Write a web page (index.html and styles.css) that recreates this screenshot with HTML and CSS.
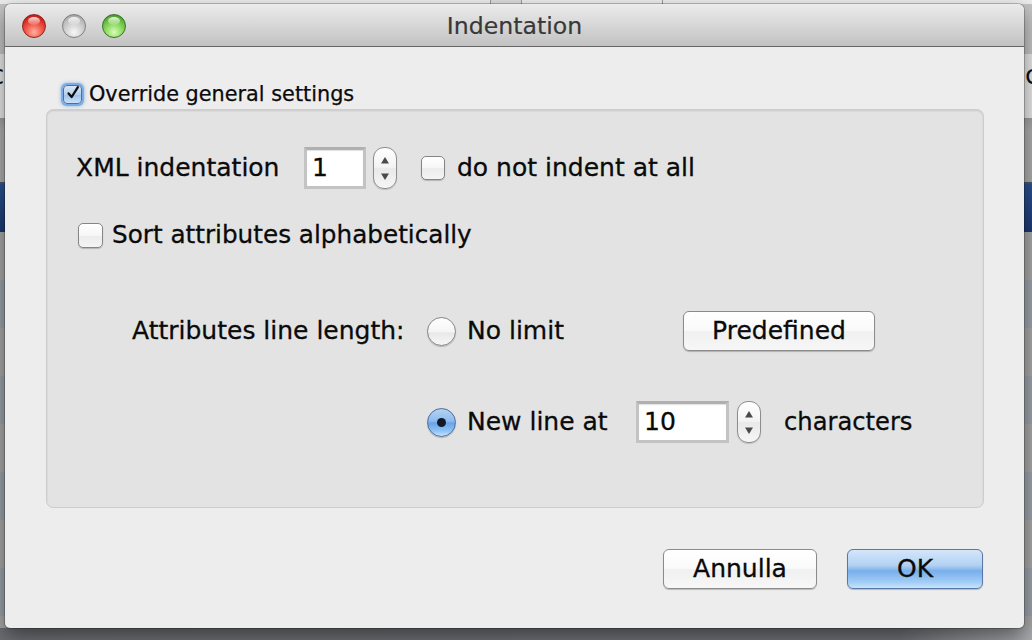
FILE: index.html
```html
<!DOCTYPE html>
<html>
<head>
<meta charset="utf-8">
<title>Indentation</title>
<link rel="stylesheet" href="styles.css">
</head>
<body>
<div class="desktop">
  <div class="behind-top">
    <span class="bt-box"></span>
    <span class="bt-text bt-search">Search in:</span>
    <span class="bt-sep"></span>
    <span class="bt-text bt-attr">Attribute values</span>
  </div>
  <span class="edge-c edge-left">c</span>
  <span class="edge-c edge-right">c</span>

  <div class="window">
    <div class="titlebar">
      <div class="lights">
        <span class="light red"></span>
        <span class="light gray"></span>
        <span class="light green"></span>
      </div>
      <div class="title">Indentation</div>
      <div></div>
    </div>

    <div class="content">
      <div class="override">
        <span class="check small checked">
          <svg width="18" height="18" viewBox="0 0 18 18"><path d="M4 9.5 L7.5 13.5 L14.5 2.5" fill="none" stroke="#0d0d0d" stroke-width="2.6" stroke-linecap="round" stroke-linejoin="round"/></svg>
        </span>
        <span class="override-text">Override general settings</span>
      </div>

      <div class="panel">
        <div class="row row-xml">
          <span class="xml-label">XML indentation</span>
          <span class="field field-1">1</span>
          <span class="stepper">
            <svg width="24" height="42" viewBox="0 0 24 42"><polygon points="8,16.5 16,16.5 12,10" fill="#4a4a4a"/><polygon points="8,26.5 16,26.5 12,33" fill="#4a4a4a"/></svg>
          </span>
          <span class="check check-indent"></span>
          <span class="opt-text indent-text">do not indent at all</span>
        </div>

        <div class="row row-sort">
          <span class="check check-sort"></span>
          <span class="opt-text sort-text">Sort attributes alphabetically</span>
        </div>

        <div class="row row-len">
          <span class="len-label">Attributes line length:</span>
          <span class="radio"></span>
          <span class="opt-text nolimit">No limit</span>
          <span class="btn btn-predef">Predefined</span>
        </div>

        <div class="row row-new">
          <span class="radio selected"><span class="dot"></span></span>
          <span class="opt-text newline">New line at</span>
          <span class="field field-10">10</span>
          <span class="stepper stepper-2">
            <svg width="24" height="42" viewBox="0 0 24 42"><polygon points="8,16.5 16,16.5 12,10" fill="#4a4a4a"/><polygon points="8,26.5 16,26.5 12,33" fill="#4a4a4a"/></svg>
          </span>
          <span class="opt-text chars">characters</span>
        </div>
      </div>

      <div class="actions">
        <span class="btn btn-cancel">Annulla</span>
        <span class="btn btn-ok">OK</span>
      </div>
    </div>
  </div>
</div>
</body>
</html>
```

FILE: styles.css
```css
* { box-sizing: border-box; }
html, body { margin: 0; padding: 0; }
body {
  width: 1032px;
  height: 640px;
  overflow: hidden;
  font-family: "DejaVu Sans", "Liberation Sans", sans-serif;
  color: #0a0a0a;
}

.desktop {
  position: relative;
  width: 1032px;
  height: 640px;
  overflow: hidden;
  background:
    linear-gradient(to right, #6d6f75 0, #6f7177 900px, #a9aaad 1032px) 0 628px / 100% 12px no-repeat,
    linear-gradient(to bottom,
      #ececec 0, #ececec 4px,
      #c4c4c4 4px, #c4c4c4 54px,
      #e7e7e7 54px, #e7e7e7 118px,
      #9e9e9e 118px, #acacac 130px, #acacac 182px,
      #4a556a 182px, #4a556a 184px,
      #2a5290 184px, #1b3a71 232px,
      transparent 232px) 0 0 / 100% 232px no-repeat,
    repeating-linear-gradient(to bottom, #a7a7a8 232px, #a7a7a8 280px, #9ca1aa 280px, #9ca1aa 328px);
}

/* window content peeking behind, at the very top */
.behind-top {
  position: absolute;
  left: 0;
  top: 0;
  width: 1032px;
  height: 4px;
  overflow: hidden;
}
.bt-box {
  position: absolute;
  left: 490px;
  top: 0;
  width: 32px;
  height: 4px;
  background: #dcdcdc;
  border-left: 1px solid #9a9a9a;
  border-right: 1px solid #9a9a9a;
}
.bt-sep {
  position: absolute;
  left: 662px;
  top: 0;
  width: 1px;
  height: 4px;
  background: #9a9a9a;
}
.bt-text {
  position: absolute;
  top: -21px;
  font-size: 24px;
  line-height: 24px;
  color: #111;
}
.bt-search { left: 540px; }
.bt-attr { left: 676px; }

.edge-c {
  position: absolute;
  top: 62px;
  font-size: 26px;
  line-height: 26px;
  color: #111;
}
.edge-left { left: -10px; }
.edge-right { left: 1025px; }

/* window */
.window {
  position: absolute;
  left: 5px;
  top: 4px;
  width: 1019px;
  height: 624px;
  background: #ededed;
  border-radius: 6px 6px 5px 5px;
  box-shadow: 0 0 0 1px rgba(0, 0, 0, 0.22), 0 8px 20px rgba(0, 0, 0, 0.45);
  display: flex;
  flex-direction: column;
  overflow: hidden;
}

.titlebar {
  flex: none;
  height: 43px;
  display: grid;
  grid-template-columns: 1fr auto 1fr;
  align-items: center;
  background: linear-gradient(to bottom, #ebebeb 0%, #d9d9d9 45%, #c2c2c2 100%);
  border-bottom: 1px solid #656565;
}
.lights {
  display: flex;
  gap: 16px;
  padding-left: 17px;
  padding-top: 1px;
}
.light {
  position: relative;
  width: 24px;
  height: 24px;
  border-radius: 50%;
}
.light::after {
  content: "";
  position: absolute;
  left: 5px;
  top: 2px;
  width: 12px;
  height: 8px;
  border-radius: 50%;
  background: linear-gradient(to bottom, rgba(255, 255, 255, 0.85), rgba(255, 255, 255, 0.1));
}
.red {
  background: radial-gradient(circle at 50% 78%, #ffb0a0 0%, #f25a4c 40%, #d52a1f 70%, #a8150e 100%);
  border: 1px solid #8f231c;
}
.gray {
  background: radial-gradient(circle at 50% 78%, #f7f7f7 0%, #d3d3d3 40%, #b5b5b5 72%, #8b8b8b 100%);
  border: 1px solid #7f7f7f;
}
.green {
  background: radial-gradient(circle at 50% 78%, #d8fbb8 0%, #8edb62 40%, #5cb538 70%, #2f7f18 100%);
  border: 1px solid #3a7228;
}
.title {
  font-size: 23.6px;
  color: #383838;
  line-height: 30px;
  padding-top: 1px;
  -webkit-text-stroke: 0.2px #383838;
}

.content {
  flex: 1;
  display: flex;
  flex-direction: column;
  padding: 0 40px 39px 41px;
}

.override {
  margin-top: 37px;
  margin-left: 17px;
  height: 20px;
  display: flex;
  align-items: center;
}
.override-text {
  margin-left: 7px;
  font-size: 20.8px;
  line-height: 20px;
  -webkit-text-stroke: 0.25px #0a0a0a;
}

.check {
  flex: none;
  display: inline-block;
  width: 25px;
  height: 25px;
  border: 1px solid #858585;
  border-radius: 5px;
  background: linear-gradient(to bottom, #ffffff 0%, #f6f6f6 50%, #ececec 52%, #f4f4f4 100%);
  box-shadow: 0 1px 1px rgba(0, 0, 0, 0.2);
}
.check.small {
  width: 19px;
  height: 19px;
  border-radius: 4px;
  border: 1px solid #4f6f99;
  background: linear-gradient(to bottom, #d7e7f8 0%, #b3d0ef 50%, #9cc2ec 52%, #c9e1f8 100%);
  box-shadow: 0 0 0 2px rgba(100, 155, 225, 0.7), 0 0 3px 3px rgba(120, 170, 230, 0.5);
  display: flex;
  align-items: center;
  justify-content: center;
}
.check.small svg { margin-top: -3px; margin-left: 1px; }

.panel {
  margin-top: 5px;
  height: 399px;
  border: 1px solid #cdcdcd;
  border-radius: 7px;
  background: #e3e3e3;
  box-shadow: inset 0 1px 2px rgba(0, 0, 0, 0.12);
  padding-left: 29px;
  display: flex;
  flex-direction: column;
}

.row {
  display: flex;
  align-items: center;
  font-size: 25px;
  line-height: 30px;
  -webkit-text-stroke: 0.3px #0a0a0a;
}
.row-xml {
  margin-top: 37px;
  height: 42px;
}
.xml-label { width: 228px; flex: none; }

.field {
  flex: none;
  height: 42px;
  background: #ffffff;
  border: 3px solid #c3c3c3;
  border-top-color: #b0b0b0;
  box-shadow: inset 0 1px 1px rgba(0, 0, 0, 0.12);
  padding-left: 5px;
  display: flex;
  align-items: center;
  font-size: 25px;
}
.field-1 { width: 62px; }
.field-10 { width: 93px; }

.stepper {
  flex: none;
  width: 24px;
  height: 42px;
  margin-left: 7px;
  border: 1px solid #8d8d8d;
  border-radius: 11px;
  background: linear-gradient(to bottom, #ffffff 0%, #f3f3f3 48%, #e9e9e9 52%, #f6f6f6 100%);
  box-shadow: 0 1px 1px rgba(0, 0, 0, 0.15);
  position: relative;
  overflow: hidden;
}
.stepper svg { position: absolute; left: -1px; top: -1px; }
.stepper-2 { margin-left: 8px; }

.check-indent { margin-left: 24px; width: 24px; height: 24px; }
.indent-text { margin-left: 12px; }

.row-sort {
  margin-top: 33px;
  height: 26px;
  margin-left: 2px;
}
.sort-text { margin-left: 9px; font-size: 24.7px; }

.row-len {
  margin-top: 63px;
  height: 40px;
  padding-left: 56px;
}
.len-label { width: 295px; flex: none; }

.radio {
  flex: none;
  width: 29px;
  height: 29px;
  border-radius: 50%;
  border: 1px solid #858585;
  background: linear-gradient(to bottom, #ffffff 0%, #f5f5f5 50%, #e8e8e8 55%, #f7f7f7 100%);
  box-shadow: 0 1px 1px rgba(0, 0, 0, 0.2);
  display: flex;
  align-items: center;
  justify-content: center;
}
.radio.selected {
  border: 1px solid #4c6c9c;
  background: linear-gradient(to bottom, #b5d3f3 0%, #8dbbee 45%, #6aa2e8 52%, #8cc2f5 80%, #c4e2fc 100%);
}
.dot {
  width: 9px;
  height: 9px;
  border-radius: 50%;
  background: #121a28;
}

.nolimit { margin-left: 11px; width: 216px; flex: none; }

.btn {
  flex: none;
  display: flex;
  align-items: center;
  justify-content: center;
  height: 40px;
  border: 1px solid #8b8b8b;
  border-radius: 6px;
  background: linear-gradient(to bottom, #ffffff 0%, #fafafa 48%, #f0f0f0 52%, #f7f7f7 100%);
  box-shadow: 0 1px 1px rgba(0, 0, 0, 0.22);
  font-size: 25px;
  line-height: 30px;
  color: #0a0a0a;
  -webkit-text-stroke: 0.3px #0a0a0a;
}
.btn-predef { width: 192px; }

.row-new {
  margin-top: 50px;
  height: 42px;
  padding-left: 351px;
}
.newline { margin-left: 11px; width: 169px; flex: none; }
.chars { margin-left: 23px; font-size: 24.2px; }

.actions {
  margin-top: auto;
  display: flex;
  justify-content: flex-end;
  gap: 30px;
  padding-right: 1px;
}
.btn-cancel { width: 154px; }
.btn-ok {
  width: 136px;
  border: 1px solid #5a78a4;
  background: linear-gradient(to bottom, #d4e6fa 0%, #b3d2f3 40%, #8fbcef 50%, #77aeec 55%, #a3cdf6 85%, #c7e4fc 100%);
}
```
